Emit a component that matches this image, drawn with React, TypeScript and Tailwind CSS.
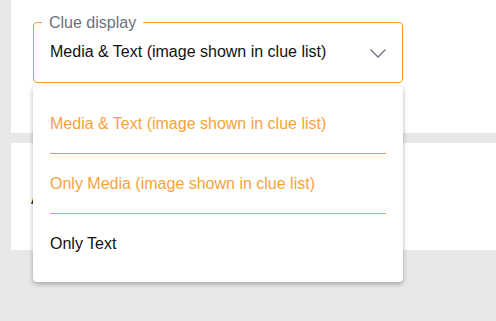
const options = [
  { label: 'Media & Text (image shown in clue list)', selected: true },
  { label: 'Only Media (image shown in clue list)', selected: true },
  { label: 'Only Text', selected: false },
]

export default function App() {
  return (
    <div className="relative h-[321px] w-[496px] overflow-hidden bg-[#e8e8e8] pl-[11px] font-['Liberation_Sans',Arial,sans-serif] text-[16px]">
      <div className="h-[133px] bg-white pl-[22px] pt-[14px]">
        <fieldset className="w-[370px] rounded-[4px] border border-[#f59e2b] pb-[9px] pl-[8px] pr-[16px]">
          <legend className="px-[7px] text-[16px] leading-[17px] text-[#6b7280]">Clue display</legend>
          <div className="flex h-[42px] items-center justify-between pl-[8px]">
            <span className="text-[#111]">Media &amp; Text (image shown in clue list)</span>
            <svg width="16" height="9" viewBox="0 0 16 9" fill="none" className="mt-[2px]">
              <polyline points="0.5,0.5 8,8 15.5,0.5" stroke="#6b7280" strokeWidth="1.3" />
            </svg>
          </div>
        </fieldset>
      </div>
      <div className="mt-[10px] h-[107px] bg-white pl-[20px] pt-[44px] text-[#111]">Answer</div>

      <div className="absolute left-[33px] top-[86px] w-[370px] rounded-[4px] bg-white py-[8px] shadow-[0_2px_5px_rgba(0,0,0,0.3)]">
        {options.map((o, i) => (
          <div key={i} className="px-[17px]">
            <div className={`flex h-[59px] items-center ${o.selected ? 'text-[#f7a33b]' : 'text-[#111]'}`}>{o.label}</div>
            <div className={`h-px ${i < 2 ? 'bg-[#f0a040]' : 'bg-transparent'}`} />
          </div>
        ))}
      </div>
    </div>
  )
}
